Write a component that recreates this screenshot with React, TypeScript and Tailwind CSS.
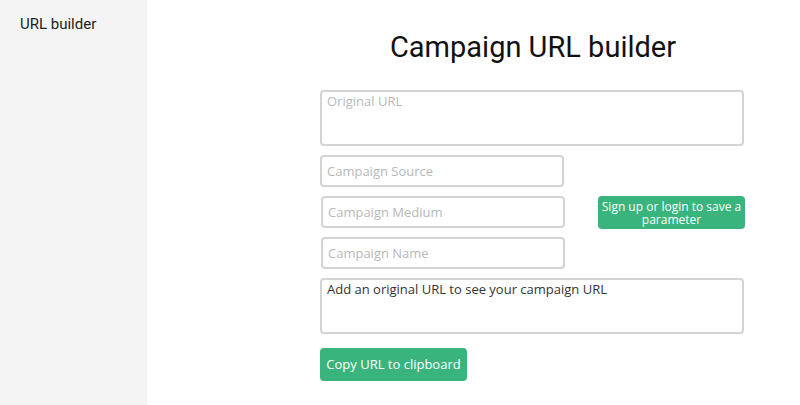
import React, { useState } from 'react';

const field =
  'block rounded-[4px] border-2 border-[#d3d3d3] bg-white px-[5px] text-[13px] text-[#333] placeholder-[#b8b8b8] outline-none';

const App: React.FC = () => {
  const [url, setUrl] = useState('');
  const [source, setSource] = useState('');
  const [medium, setMedium] = useState('');
  const [name, setName] = useState('');

  return (
    <div className="flex min-h-[405px] bg-white" style={{ fontFamily: 'Roboto, sans-serif' }}>
      {/* Sidebar */}
      <aside className="w-[147px] shrink-0 bg-[#f4f4f4] px-5 pt-[13px]">
        <div className="text-[15px] text-[#222]">URL builder</div>
      </aside>

      {/* Main */}
      <main className="flex-1 pl-[173px] pt-[28px]">
        <div className="w-[426px]">
          <h1 className="mb-[24px] text-center text-[29px] leading-[38px] text-[#111]">Campaign URL builder</h1>

          <div className="flex flex-col" style={{ fontFamily: '"Open Sans", sans-serif' }}>
            <textarea
              value={url}
              onChange={(e) => setUrl(e.target.value)}
              placeholder="Original URL"
              className={`${field} h-[56px] w-[424px] resize-none pt-0 leading-[18px]`}
            />

            <div className="mt-[9px] flex">
              <div className="flex flex-col gap-[9px]">
                <input
                  value={source}
                  onChange={(e) => setSource(e.target.value)}
                  placeholder="Campaign Source"
                  className={`${field} h-[32px] w-[244px]`}
                />
                <input
                  value={medium}
                  onChange={(e) => setMedium(e.target.value)}
                  placeholder="Campaign Medium"
                  className={`${field} ml-[1px] h-[32px] w-[244px]`}
                />
                <input
                  value={name}
                  onChange={(e) => setName(e.target.value)}
                  placeholder="Campaign Name"
                  className={`${field} ml-[1px] h-[32px] w-[244px]`}
                />
              </div>
              <div className="ml-[33px] pt-[41px]">
                <button className="flex h-[33px] w-[147px] flex-col items-center justify-center rounded-[4px] bg-[#38b47c] text-[12px] leading-[13px] text-white">
                  <span>Sign up or login to save a</span>
                  <span>parameter</span>
                </button>
              </div>
            </div>

            <div
              className={`${field} mt-[9px] h-[56px] w-[424px] pt-0 leading-[18px] text-[13px] text-[#222]`}
            >
              Add an original URL to see your campaign URL
            </div>

            <div className="mt-[14px]">
              <button className="h-[33px] w-[147px] rounded-[4px] bg-[#38b47c] text-[13px] text-white">
                Copy URL to clipboard
              </button>
            </div>
          </div>
        </div>
      </main>
    </div>
  );
};

export default App;
